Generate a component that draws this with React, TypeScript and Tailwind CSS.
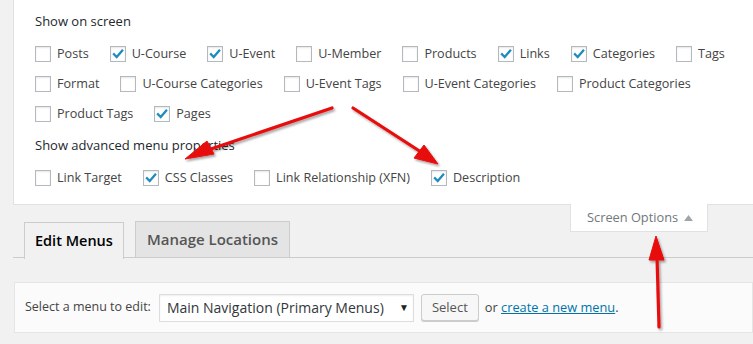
import React from "react";

type Option = { label: string; checked?: boolean };

const screenRows: Option[][] = [
  [
    { label: "Posts" },
    { label: "U-Course", checked: true },
    { label: "U-Event", checked: true },
    { label: "U-Member" },
    { label: "Products" },
    { label: "Links", checked: true },
    { label: "Categories", checked: true },
    { label: "Tags" },
  ],
  [
    { label: "Format" },
    { label: "U-Course Categories" },
    { label: "U-Event Tags" },
    { label: "U-Event Categories" },
    { label: "Product Categories" },
  ],
  [{ label: "Product Tags" }, { label: "Pages", checked: true }],
];

const advancedRow: Option[] = [
  { label: "Link Target" },
  { label: "CSS Classes", checked: true },
  { label: "Link Relationship (XFN)" },
  { label: "Description", checked: true },
];

function Checkbox({ checked }: { checked?: boolean }) {
  return (
    <span className="w-4 h-4 shrink-0 bg-white border border-[#b4b9be] shadow-[inset_0_1px_2px_rgba(0,0,0,0.1)] flex items-center justify-center">
      {checked && (
        <svg width="12" height="12" viewBox="0 0 12 12">
          <path
            d="M2 6.2 L4.7 9 L10.2 2.6"
            fill="none"
            stroke="#1e8cbe"
            strokeWidth="2.3"
            strokeLinecap="square"
          />
        </svg>
      )}
    </span>
  );
}

function OptionRow({ items }: { items: Option[] }) {
  return (
    <div className="flex items-center h-[30px] gap-x-[21px]">
      {items.map((item) => (
        <label key={item.label} className="flex items-center gap-[6px] text-[12.6px] text-[#444]">
          <Checkbox checked={item.checked} />
          <span>{item.label}</span>
        </label>
      ))}
    </div>
  );
}

function Arrows() {
  return (
    <svg
      className="absolute inset-0 pointer-events-none"
      width="753"
      height="344"
      viewBox="0 0 753 344"
    >
      <defs>
        <filter id="sh" x="-20%" y="-20%" width="140%" height="140%">
          <feDropShadow dx="1.5" dy="2" stdDeviation="1.2" floodColor="#000" floodOpacity="0.35" />
        </filter>
      </defs>
      <g fill="#e80a0a" stroke="#e80a0a" filter="url(#sh)">
        <line x1="332" y1="108" x2="205" y2="151" strokeWidth="3.2" strokeLinecap="round" />
        <polygon points="185,159 207,141 214,154" strokeWidth="1" strokeLinejoin="round" />
        <line x1="353" y1="108" x2="421" y2="152" strokeWidth="3.2" strokeLinecap="round" />
        <polygon points="438,164 414,158 424,145" strokeWidth="1" strokeLinejoin="round" />
        <line x1="659" y1="327" x2="657" y2="256" strokeWidth="3.2" strokeLinecap="round" />
        <polygon points="656,236 649,260 664,260" strokeWidth="1" strokeLinejoin="round" />
      </g>
    </svg>
  );
}

export default function App() {
  return (
    <div className="relative w-[753px] h-[344px] overflow-hidden bg-[#f1f1f1] font-['Open_Sans',_'Liberation_Sans',_sans-serif]">
      <div className="ml-[13px] h-[205px] bg-white border-l border-b border-[#e1e1e1] pl-[21px] pt-[11px]">
        <div className="h-5 leading-5 text-[13px] text-[#23282d]">Show on screen</div>
        <div className="mt-2">
          {screenRows.map((row, i) => (
            <OptionRow key={i} items={row} />
          ))}
        </div>
        <div className="mt-[6px] h-5 leading-5 text-[13px] text-[#23282d]">
          Show advanced menu properties
        </div>
        <div className="mt-2">
          <OptionRow items={advancedRow} />
        </div>
      </div>

      <div className="flex items-start ml-[13px] h-[53px] border-b border-[#ccc]">
        <div className="flex gap-[11px] ml-[11px] mt-4">
          <div className="h-[37px] px-[10px] border border-[#ccc] border-b-0 bg-[#f1f1f1] flex items-center text-[14.5px] font-semibold text-[#000] relative top-px">
            Edit Menus
          </div>
          <div className="h-[37px] px-[11px] border border-[#ccc] bg-[#e4e4e4] flex items-center text-[15px] font-semibold text-[#555]">
            Manage Locations
          </div>
        </div>
        <div className="ml-auto mr-[45px] -mt-px w-[138px] h-[28px] bg-white border border-[#e1e1e1] border-t-0 flex items-center pl-[16px] gap-[6px] text-[12.8px] text-[#72777c]">
          <span>Screen Options</span>
          <svg width="9" height="6" viewBox="0 0 9 6">
            <polygon points="4.5,0 9,6 0,6" fill="#a0a5aa" />
          </svg>
        </div>
      </div>

      <div className="mt-6 ml-[14px] h-[51px] bg-[#fbfbfb] border border-[#e5e5e5] flex items-center pl-[10px]">
        <span className="text-[12.5px] text-[#444]">Select a menu to edit:</span>
        <div className="ml-[8px] w-[255px] h-[28px] bg-white border border-[#ddd] shadow-[inset_0_1px_2px_rgba(0,0,0,0.07)] flex items-center pl-[7px] pr-[4px] text-[14px] text-[#32373c]">
          <span className="flex-1">Main Navigation (Primary Menus)</span>
          <span className="text-[10px] text-[#222]">▼</span>
        </div>
        <button className="ml-[7px] h-[27px] px-[10px] bg-[#f7f7f7] border border-[#ccc] rounded-[3px] shadow-[0_1px_0_#ccc] text-[13px] text-[#555]">
          Select
        </button>
        <span className="ml-[6px] text-[12.8px] text-[#444]">
          or{" "}
          <a href="#" className="text-[#0073aa] underline">
            create a new menu
          </a>
          .
        </span>
      </div>

      <Arrows />
    </div>
  );
}
